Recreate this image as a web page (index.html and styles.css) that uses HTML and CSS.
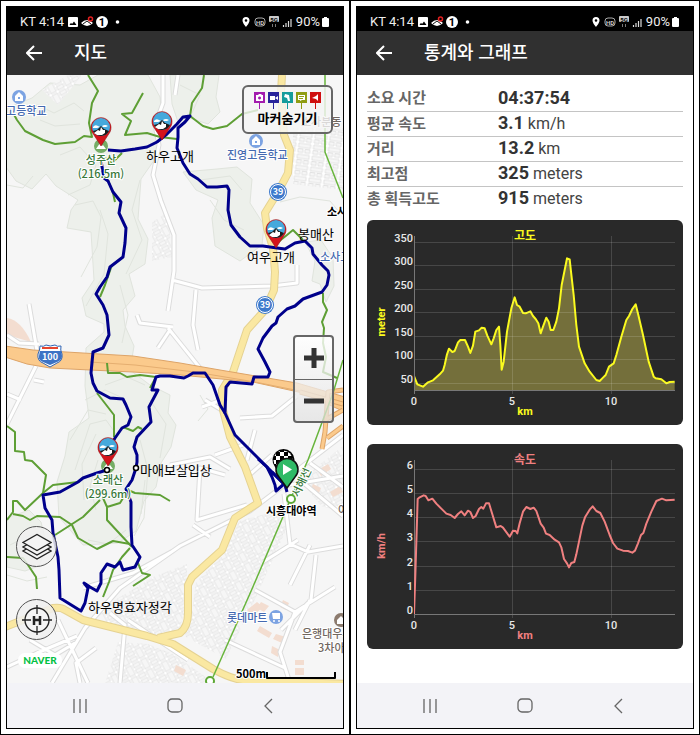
FILE: index.html
```html
<!DOCTYPE html>
<html lang="ko">

<head>
    <meta charset="UTF-8">
    <meta name="viewport" content="width=device-width, initial-scale=1.0">
    <title>지도 / 통계와 그래프</title>
    <link rel="stylesheet" href="styles.css">
</head>

<body>

    <main class="screens">
        <section class="frame">
            <div class="phone">
                <div class="status-bar">
                    <span>KT 4:14</span>
                    <svg class="status-left" viewBox="0 0 52 14">
                        <g id="status-left">
                            <path fill="#fff" fill-rule="evenodd" d="M1 2h8q1 0 1 1v8q0 1-1 1H1q-1 0-1-1V3q0-1 1-1zM1.500 10h7L6 6.500 4 9 3 7.800z" />
                            <path fill="#fff" d="M13 8q6-6 12 0-6 6-12 0z" />
                            <path fill="none" stroke="#111" d="M15 9l4-3 4 3" />
                            <circle cx="22.500" cy="4" r="2" fill="none" stroke="#e32020" stroke-width="1.500" />
                            <circle cx="34" cy="7" r="6" fill="#fff" />
                            <text class="badge-number" x="34" y="11">1</text>
                            <circle cx="49.500" cy="7" r="1.800" fill="#fff" />
                        </g>
                    </svg>
                    <svg class="status-right" viewBox="0 0 50 14">
                        <g id="status-right">
                            <path fill="#fff" fill-rule="evenodd" d="M4 2a3.500 3.500 0 0 1 3.500 3.500C7.500 8 4 12 4 12S.5 8 .5 5.500A3.500 3.500 0 0 1 4 2zm0 2.200a1.300 1.300 0 1 0 0 2.600 1.300 1.300 0 0 0 0-2.600z" />
                            <rect x="13" y="3" width="10" height="8" rx="3" fill="none" stroke="#aaa" />
                            <text class="tiny" x="18" y="9.500">HD</text>
                            <rect x="27" y="1" width="10" height="6" rx="1" fill="#ccc" />
                            <text class="tiny dark" x="32" y="6.500">5G</text>
                            <path stroke="#777" d="M30.500 9v3M33.500 9v3" />
                            <path stroke="#ddd" stroke-width="1.200" d="M41.500 12v-2M44 12V8M46.500 12V6M49 12V4" />
                        </g>
                    </svg>
                    <span>90%</span>
                    <svg class="battery" viewBox="0 0 8 12"><path id="battery" fill="#fff" d="M2 1h3v1h1q1 0 1 1v7q0 1-1 1H1q-1 0-1-1V3q0-1 1-1h1z" /></svg>
                </div>
                <header class="title-bar">
                    <button class="back-btn" aria-label="뒤로">
                        <svg viewBox="0 0 16 16"><path id="arrow" d="M16 8H1M8 1L1 8l7 7" /></svg>
                    </button>
                    <h1>지도</h1>
                </header>

                <div class="map">
                    <svg class="map-canvas" viewBox="7 75 336 608">
                        <defs>
                            <pattern id="blocks" width="17" height="12" patternUnits="userSpaceOnUse" patternTransform="rotate(-28)">
                                <rect width="17" height="12" fill="#fff" />
                                <path class="block" d="M1 1h6v10H1zM9 1h7v4H9zM9 7h7v4H9z" />
                            </pattern>
                            <pattern id="blocks-right" width="15" height="11" patternUnits="userSpaceOnUse" patternTransform="rotate(8)">
                                <rect width="15" height="11" fill="#fff" />
                                <path class="block" d="M1 1h12v4H1zM1 6.500h5v3.500H1zM8 6.500h5v3.500H8z" />
                            </pattern>
                            <pattern id="checks" width="8" height="8" patternUnits="userSpaceOnUse">
                                <rect width="8" height="8" fill="#fff" />
                                <path d="M0 0h4v4H0zM4 4h4v4H4z" />
                            </pattern>
                            <path id="streets" d="M29 304l8 47M36 366l-29 58M34 380l10 2M7 394l14 6M7 335l12 8 20 1M163 75v28l-8 22 4 20-6 30 8 26 13 34v36l-6 40M168 328l32 40M178 75l-3 20M172 280l30 8 70-2 25-3V265M196 290l-3 35 5 25M137 315l3 8 33 4M170 330l-12 18M205 400l20 12M202 407l25-9M215 455l28-10M170 465l40-8 20 12M240 418l32-2 25-20M255 430l-8 30M272 455l-25 22M225 475l-25-7-3 52 50-15M193 525l17 12M7 667l30-14 40-17M52 683l33-55 35-40 60-42 70-35 33-25 60-10M83 588l50-15 40-22M120 683l5-58-15-12M128 620l60 40M284 494l6 50 18 8 35-6M298 540l-35 22M310 545l-20 40M316 555l-5 45-30 30M255 590l40 22 40-25M295 612l-15 40 10 31M225 640l60 28M310 600l-15 30M300 480l43 36M310 463l33 24M343 435l-52 40M30 640l25 15 20-12M58 620l30 63M80 683l-4-20 20-15" />
                            <path id="main-yellow" d="M282 75l-1 18 3 42 6 15-2 23-10 19-13 21 2 15 6 20 2 24-1 18-9 20-18 20-14 42-11 18 1 20 7 27 15 30 13 36-23 15-13 32-30 27-4 8v28q0 14-8 20l-22 5" />
                            <path id="south-yellow" d="M0 629L53 608q8-1 12 2l18 10 64 16 26 8 40 25q18 10 30 11l107 4" />
                            <path id="orange-ramps" d="M343 390l-15 2-3 40-3 17M327 438l16-12M325 420l18-10M300 392l43 12" />
                            <g id="peak">
                                <path d="M0 19L-9 5A10 10 0 1 1 9 5z" fill="#d4141c" stroke="#961016" stroke-width=".6" />
                                <circle r="9" fill="#45a9dc" />
                                <path d="M-8 0q2-3 5-1l2 1-3 1h-4zM1-1q3-2 6 0l-2 1H2z" fill="#fff" />
                                <path d="M-8 4l4-1 4-4 3 3 5 2a9 9 0 0 1-16 0z" fill="#1b1b1b" />
                                <path d="M-7 6l4-3 2 1 1-4 2 3 2 0 0 3-3 2h-5z" fill="#fff" />
                            </g>
                            <g id="summit">
                                <circle r="7" fill="#75ad65" />
                                <path d="M-5 3l4-6 2 3 1-1 3 4z" fill="#fff" />
                            </g>
                            <g id="route-39">
                                <circle r="9" fill="#3d79cc" />
                                <circle r="7.500" fill="#3d79cc" stroke="#fff" />
                                <text class="road-number" y="3">39</text>
                            </g>
                        </defs>

                        <rect class="land" x="7" y="75" width="336" height="608" />

                        <g class="forest">
                            <path d="M7 108l25-10 18-15 30 2 18-10h50l12 22 3 30-8 32-14 20-3 40 10 20-3 25-16 10 6 22-12 14 2 16 9 20-4 24 20 15 20 10-2 18 8 12-5 22-10 16-5 24-12 14-8 30-18 12-35 2-24-28-2-35 8-26 4-24 20-14-4-32 1-38 18-16v-8l-18-8-4-18 12-18-3-48-24-4 4-18 7-10-22-14-10-12-14 15-16-8-10-14z" />
                            <path d="M170 75h49l-3 22 4 15-12 12-18-6-12 4-6-18z" />
                            <path d="M183 172l34-3 20-2 15 12-2 24 14 22-2 20-22 16-25-15-3-28 6-18-22-10z" />
                            <path d="M305 242l16-2 12 18 1 28-8 16-6-18-8-3 3-20z" />
                            <path d="M7 518l22-8 12 12 6 24-8 20-14 5-18-4z" />
                        </g>
                        <g class="contour">
                            <path d="M20 110l18-5 16 8 20-10 10 8M40 120l15 6 25-2M60 155l20-8 16 18-6 20-22 10M75 205l18-4 8 16-4 30-16 30M100 210l8 24-4 40-18 32M140 180l-8 30 10 30-16 34M120 285l8 30-6 28M85 400l20-10 18 8M70 440l18-30 18 4M75 470l15-46 16-4 10 14M84 500l-2-36 14-30M96 510l-6-24 8-26M150 400l16 24-6 34M140 440l8 30-4 48-10 18M145 480l-4 34M88 540l20 4 18-14M105 385l22-8 18 8" />
                            <path d="M180 85l20 10-8 18M200 180l30-4 12 14M210 200l14 20 20 10M10 545l20-10 8 8M7 575l20 6 20-4M7 185l16 3 10-12M280 202l20-5 30 4 10 12M200 395l8 14-10 12" />
                        </g>

                        <path fill="url(#blocks)" d="M95 612l60-36 32-12v40l-8 27-24 6-45-12z" />
                        <path fill="url(#blocks)" d="M196 582l28-28 15-33 45-12 6 12-32 72-32 66-40-22-4-10 10-16z" />
                        <path fill="url(#blocks)" d="M118 642l30 2 25 10 37 26 2 3H105z" />
                        <path fill="url(#blocks-right)" d="M293 128h50v62l-50-6z" />
                        <path fill="url(#blocks)" d="M300 480l43-34v66l-22-6z" />
                        <path fill="url(#blocks)" d="M42 90l26-15h14l-24 30zM152 222l16-10 4 45-20 4z" />
                        <g class="buildings">
                            <path d="M7 318q14 2 24 24l-24-7z" />
                            <path d="M247 610l10-8 6 5-10 9zM261 602l8 4-5 6-7-4zM260 626l12 7-3 5-12-7zM276 634l10 3-4 6-9-4zM283 600l6 3-3 7-6-3zM272 646l8 4-2 7-7-4zM295 660h9v5h-9zM295 668h9v7h-9zM176 665l10 5-3 6-9-5zM313 484l8 4-3 7-8-4zM318 470l10-6 3 5-10 7zM330 492l10-6 3 6-10 5z" />
                        </g>

                        <use href="#streets" class="street-case" />
                        <use href="#streets" class="street" />
                        <use href="#main-yellow" class="yellow-case" />
                        <use href="#south-yellow" class="yellow-case" />
                        <use href="#main-yellow" class="yellow" />
                        <use href="#south-yellow" class="yellow" />
                        <path class="highway" d="M5 346l28 4 100 6 47 7 40 7 77 13 48 14v15l-42-19-50-11-73-7-47-3-43-2-40-2-23-4-22-7z" />
                        <path class="highway-line" d="M90 362l45 3 60 7 60 10 50 10 38 13" />
                        <use href="#orange-ramps" class="ramp-case" />
                        <use href="#orange-ramps" class="ramp" />

                        <path class="rail" d="M343 360l-10 33-25 67-17 38-39 91-39 88M325 75v77l18 46" />
                        <g class="trail">
                            <path d="M88 75l10 16-6 12-3 20 3 14-8-1-9 6-20 2-12-4-18-9-8-11-4-7" />
                            <path d="M143 93l-11 20-10 1 9 7-6 14 22-2 13 4 17 2M204 75l-2 13-10 15-2 13 13 10 10 3 14-3 15-12 16-4" />
                            <path d="M104 157l8 6 10-10M108 180l5 13 2 9M112 265l-7 20-5 12M277 243l10-8 6-5 10 10M323 293v9l4 8-5 12 2 6-1 15 3 14-3 15 14 6" />
                            <path d="M107 363l1 10h12l7 4 13-2 16 2-6 11M97 393l17 22v22M123 427l10 4 5-4 4 2" />
                            <path d="M7 426l8 6v19l9 1 1 8 7 1 14 14-3 18-18 17-8-9h-4v11l-6 8M13 514l10 2 7 4 7-4 23 1 12 8 6 13 19 11 16-8 17 3" />
                            <path d="M43 493l10-8 25-3M100 500l-17 17-28 18M103 498l4 9v13l25 27M107 507l13-4 8-13 7 3 25 2 10 6M7 557l16 1 5 7 8 12 1 12" />
                            <path d="M130 548l-8 9-9 13-4 12-6 15M138 563l4 10 8 2-17 11" />
                        </g>

                        <use href="#summit" x="101" y="146" />
                        <use href="#summit" x="108" y="466" />

                        <g class="route">
                            <path d="M108 150l13 1 14-2 12-2 10-5 10-8 10-10 6-7 7-1-5 6-7 6v9l-1 11 6 15 7 11 8 5 9 8h10l10-1 2 4-1 20 3 15 9 12 10 9h13l14 2 8 1 10-6 10-2 7 7 1 6 9 11 6 6 1 4-2 10-5 7-19 7-8 7-8 3-9 8-2 6-4 3-9 12-5 11 7 13 5 10-2 5h-14l-2 7-22-2-4 5-1 26 10 22 25 25 12 12 13 13 2 7" />
                            <path d="M225 413l-5-8-7-20-8-12h-12l-5 3-4 2-14-2h-10l-4 1-4 13h6l-9 17 2 15-14 15-3 10 3 8v7l-1 6-4 12-6 9 5 13v25l1 18 8 12-5 10-12 3-3-8-5 5-8-3-6 9v10l-4 8-7-4-6-4 4 5-3 15-4 8-21-13-1-28-1-13-5-24-1-13-7-12-2-13 17-3 18-10 5-4 14-5 10-3" />
                            <path d="M111 445l4-7 7-10 6-3 3-8-5-12-3-6-13-1-13-7-4-8-2-10 2-21 10-4 6-13-2-20-4-10-7-11 4-7 7-10 3-10 13-10 2-14 1-15-7-15 2-11-8-10-5-11-4-3-4-23" />
                            <path d="M258 459l9 8 5 10 3 8 1 6 8-7-12-12" />
                        </g>
                        <circle class="stop" cx="107" cy="470" r="2.500" />
                        <circle class="stop" cx="136" cy="468" r="2.500" />

                        <path fill="#fff" stroke="#2f64b4" d="M40 346q4 1 6-1 4 2 9 0 2 2 6 1-1 4 1 8 1 7-5 9l-7 4-7-4q-6-2-5-9 2-4 2-8z" />
                        <path fill="#3c73c5" d="M40 351h21l1 5q0 4-5 6l-7 3-7-3q-5-2-4-6z" />
                        <path fill="#e6452e" d="M42 347h16v2H42z" />
                        <text class="road-number" x="50" y="360">100</text>
                        <use href="#route-39" x="278" y="192" />
                        <use href="#route-39" x="265" y="305" />

                        <g class="poi">
                            <circle cx="19" cy="97" r="7" />
                            <circle cx="256" cy="141" r="7" />
                            <circle cx="276" cy="617" r="7" />
                            <circle cx="341" cy="620" r="7" fill="#8c7b6e" />
                            <path fill="#fff" d="M15 96l4-4 4 4v5h-8zM252 140l4-4 4 4v5h-8zM272 613h8v6h-7zM337 620l4-4 4 4v4h-8z" />
                            <path fill="#7ca3e2" d="M18 97h2v2h-2zM255 141h2v2h-2z" />
                            <circle cx="274" cy="621" r="1" fill="#fff" />
                            <circle cx="279" cy="621" r="1" fill="#fff" />
                        </g>
                        <circle class="station" cx="291" cy="499" r="4" />
                        <circle class="station" cx="210" cy="681" r="4" />

                        <g class="text-blue">
                            <text x="-4" y="115">명고등학교</text>
                            <text x="227" y="159">진영고등학교</text>
                            <text x="320" y="261">소사고</text>
                            <text x="227" y="622">롯데마트</text>
                        </g>
                        <g class="text-gray">
                            <text x="301" y="126">소사분동</text>
                            <text x="338" y="514">어</text>
                            <text x="302" y="638">은행대우푸</text>
                            <text x="318" y="652">3차아</text>
                        </g>
                        <g class="text-green">
                            <text x="101" y="164">성주산</text>
                            <text x="101" y="178">(216.5m)</text>
                            <text x="108" y="484">소래산</text>
                            <text x="108" y="498">(299.6m)</text>
                            <text transform="translate(305 484) rotate(-65)">서해선</text>
                        </g>
                        <g class="text-black">
                            <text x="146" y="161">하우고개</text>
                            <text x="298" y="239">봉매산</text>
                            <text x="247" y="262">여우고개</text>
                            <text x="140" y="475">마애보살입상</text>
                            <text x="88" y="612">하우명효자정각</text>
                        </g>
                        <g class="text-bold">
                            <text x="327" y="216">소사</text>
                            <text x="266" y="515">시흥대야역</text>
                            <text x="236" y="678">500m</text>
                        </g>
                        <path class="scale" d="M267 672v6h68v-6" />

                        <use href="#peak" x="101" y="127" />
                        <use href="#peak" x="162" y="121" />
                        <use href="#peak" x="276" y="229" />
                        <use href="#peak" x="108" y="447" />
                        <path d="M284 482l-9-15a11 11 0 1 1 17 0z" />
                        <circle cx="283" cy="460" r="9.500" fill="url(#checks)" />
                        <path fill="#2fba66" stroke="#111" stroke-width="1.500" d="M287 488l-8-11a11 11 0 1 1 16 0z" />
                        <path fill="#fff" d="M283 464v11l9-5.500z" />
                    </svg>

                    <button class="marker-btn">
                        <svg viewBox="0 0 67 17">
                            <path fill="#a31cae" d="M0 0h11v11H6v6H5v-6H0z" />
                            <path fill="#29249b" d="M14 0h11v11h-5v6h-1v-6h-5z" />
                            <path fill="#159c9c" d="M28 0h11v11h-5v6h-1v-6h-5z" />
                            <path fill="#8f9d13" d="M42 0h11v11h-5v6h-1v-6h-5z" />
                            <path fill="#cf1010" d="M56 0h11v11h-5v6h-1v-6h-5z" />
                            <path fill="#fff" fill-rule="evenodd" d="M2 3h2l1-1h2l1 1h1v6H2zM5.500 4.500a1.500 1.500 0 1 0 .1 0zM16 4h5v4h-5zM21 6l3-2v4zM31 2l4 1 1 6-2 0-1-3-3-1zM44 3h7v5h-3l-2 1V8h-2zM64 2v7l-2-2-4-1 4-2z" />
                            <path stroke="#8f9d13" d="M45 4.500h5M45 6.500h4" />
                        </svg>
                        마커숨기기
                    </button>

                    <div class="zoom">
                        <button aria-label="확대"><svg viewBox="0 0 20 20"><path d="M10 0v20M0 10h20" /></svg></button>
                        <button aria-label="축소"><svg viewBox="0 0 20 20"><path d="M0 10h20" /></svg></button>
                    </div>

                    <div class="map-tools">
                        <button class="round-btn" aria-label="지도 레이어">
                            <svg viewBox="0 0 30 30">
                                <path d="M1 19l14 8 14-8-14-8z" />
                                <path d="M1 15l14 8 14-8-14-8z" />
                                <path d="M1 10.500l14 8 14-8-14-8z" />
                            </svg>
                        </button>
                        <button class="round-btn" aria-label="현재 위치">
                            <svg viewBox="0 0 30 30">
                                <circle cx="15" cy="15" r="12" />
                                <path d="M15 0v9M15 21v9M0 15h9M21 15h9" />
                                <path class="thick" d="M12 11v9M18 11v9M12 15h6" />
                            </svg>
                        </button>
                        <a class="naver" href="#">NAVER</a>
                    </div>
                </div>

                <nav class="nav-bar">
                    <button aria-label="최근 앱"><svg viewBox="0 0 16 16"><path id="nav-recent" d="M1 1v14M7 1v14M13 1v14" /></svg></button>
                    <button aria-label="홈"><svg viewBox="0 0 16 16"><rect id="nav-home" x="1" y="1" width="14" height="13" rx="4" /></svg></button>
                    <button aria-label="뒤로"><svg viewBox="0 0 16 16"><path id="nav-back" d="M11 1L4 8l7 7" /></svg></button>
                </nav>
            </div>
        </section>

        <section class="frame">
            <div class="phone">
                <div class="status-bar">
                    <span>KT 4:14</span>
                    <svg class="status-left" viewBox="0 0 52 14"><use href="#status-left" /></svg>
                    <svg class="status-right" viewBox="0 0 50 14"><use href="#status-right" /></svg>
                    <span>90%</span>
                    <svg class="battery" viewBox="0 0 8 12"><use href="#battery" /></svg>
                </div>
                <header class="title-bar">
                    <button class="back-btn" aria-label="뒤로">
                        <svg viewBox="0 0 16 16"><use href="#arrow" /></svg>
                    </button>
                    <h1>통계와 그래프</h1>
                </header>

                <div class="stats">
                    <table>
                        <tr>
                            <th scope="row">소요 시간</th>
                            <td><b>04:37:54</b></td>
                        </tr>
                        <tr>
                            <th scope="row">평균 속도</th>
                            <td><b>3.1</b> km/h</td>
                        </tr>
                        <tr>
                            <th scope="row">거리</th>
                            <td><b>13.2</b> km</td>
                        </tr>
                        <tr>
                            <th scope="row">최고점</th>
                            <td><b>325</b> meters</td>
                        </tr>
                        <tr>
                            <th scope="row">총 획득고도</th>
                            <td><b>915</b> meters</td>
                        </tr>
                    </table>

                    <svg class="chart altitude" viewBox="0 0 316 205">
                        <svg x="47" y="0" width="261" height="205" viewBox="193 15 783 615">
                            <path class="area" d="M193 483L203 508 220 515 235 502 250 496 270 478 280 467 285 450 292 418 298 401 308 411 315 408 325 382 332 375 346 375 355 395 362 414 370 392 377 350 388 346 396 338 405 340 413 362 425 388 432 370 440 345 448 335 452 390 456 464 462 440 472 350 485 280 495 247 502 270 510 275 520 294 528 295 542 289 550 303 558 312 566 325 573 355 580 335 590 308 597 320 603 345 611 345 620 320 628 280 636 210 645 165 652 130 660 133 664 170 672 240 680 330 688 395 705 445 720 470 740 495 750 498 760 488 768 480 778 455 792 445 800 420 815 365 830 315 838 303 848 282 858 268 866 300 880 360 897 440 912 485 918 490 935 493 950 505 960 501 975 500V525H193z" />
                            <path class="line" d="M193 483L203 508 220 515 235 502 250 496 270 478 280 467 285 450 292 418 298 401 308 411 315 408 325 382 332 375 346 375 355 395 362 414 370 392 377 350 388 346 396 338 405 340 413 362 425 388 432 370 440 345 448 335 452 390 456 464 462 440 472 350 485 280 495 247 502 270 510 275 520 294 528 295 542 289 550 303 558 312 566 325 573 355 580 335 590 308 597 320 603 345 611 345 620 320 628 280 636 210 645 165 652 130 660 133 664 170 672 240 680 330 688 395 705 445 720 470 740 495 750 498 760 488 768 480 778 455 792 445 800 420 815 365 830 315 838 303 848 282 858 268 866 300 880 360 897 440 912 485 918 490 935 493 950 505 960 501 975 500" />
                        </svg>
                        <path class="grid" d="M47 22.500h261M47 45.500h261M47 69.500h261M47 92.500h261M47 116.500h261M47 139.500h261M47 163.500h261M145.500 16v158M244.500 16v158" />
                        <path class="axis" d="M47.500 16v158M47 170.500h261" />
                        <g class="y-labels">
                            <text x="46" y="22">350</text>
                            <text x="46" y="45">300</text>
                            <text x="46" y="69">250</text>
                            <text x="46" y="92">200</text>
                            <text x="46" y="116">150</text>
                            <text x="46" y="139">100</text>
                            <text x="46" y="163">50</text>
                        </g>
                        <g class="x-labels">
                            <text x="47" y="185">0</text>
                            <text x="145" y="185">5</text>
                            <text x="244" y="185">10</text>
                        </g>
                        <text class="chart-title" x="158" y="20">고도</text>
                        <text class="unit" x="158" y="195">km</text>
                        <text class="unit" transform="translate(18 102) rotate(-90)">meter</text>
                    </svg>

                    <svg class="chart speed" viewBox="0 0 316 205">
                        <path class="grid" d="M47 25.500h261M47 49.500h261M47 73.500h261M47 97.500h261M47 122.500h261M47 146.500h261M145.500 16v158M244.500 16v158" />
                        <path class="axis" d="M47.500 16v158M47 170.500h261" />
                        <svg x="47" y="0" width="261" height="205" viewBox="193 27 783 615">
                            <path class="line" d="M193 537L197 420 204 192 210 187 222 181 228 183 236 196 248 191 260 206 278 224 290 236 303 240 315 249 325 237 335 229 345 241 355 227 362 231 370 249 378 243 388 222 395 216 401 221 409 205 418 205 428 238 440 277 453 273 460 278 480 305 490 287 498 288 503 295 510 265 520 230 530 216 542 222 552 218 560 228 573 266 582 278 589 296 600 300 615 314 628 322 635 337 643 372 652 385 658 397 665 384 674 381 680 358 688 320 698 272 706 247 720 224 729 214 740 228 752 234 765 260 780 300 790 324 803 341 820 347 835 348 848 353 856 347 865 325 874 300 881 294 890 266 905 230 920 198 937 191 950 196 975 194" />
                        </svg>
                        <g class="y-labels">
                            <text x="46" y="25">6</text>
                            <text x="46" y="49">5</text>
                            <text x="46" y="73">4</text>
                            <text x="46" y="97">3</text>
                            <text x="46" y="122">2</text>
                            <text x="46" y="146">1</text>
                            <text x="46" y="170">0</text>
                        </g>
                        <g class="x-labels">
                            <text x="47" y="185">0</text>
                            <text x="145" y="185">5</text>
                            <text x="244" y="185">10</text>
                        </g>
                        <text class="chart-title" x="158" y="20">속도</text>
                        <text class="unit" x="158" y="195">km</text>
                        <text class="unit" transform="translate(18 102) rotate(-90)">km/h</text>
                    </svg>
                </div>

                <nav class="nav-bar">
                    <button aria-label="최근 앱"><svg viewBox="0 0 16 16"><use href="#nav-recent" /></svg></button>
                    <button aria-label="홈"><svg viewBox="0 0 16 16"><use href="#nav-home" /></svg></button>
                    <button aria-label="뒤로"><svg viewBox="0 0 16 16"><use href="#nav-back" /></svg></button>
                </nav>
            </div>
        </section>
    </main>

</body>

</html>
```
FILE: styles.css
```css
* {
    box-sizing: border-box;
}

body {
    margin: 0;
    background-color: #fff;
    font-family: Roboto, "Noto Sans CJK KR", sans-serif;
}

button {
    margin: 0;
    padding: 0;
    border: none;
    background: none;
    font-family: inherit;
    cursor: pointer;
}

svg {
    display: block;
}

.screens {
    display: grid;
    grid-template-columns: 1fr 1fr;
    min-height: 100vh;
}

.frame {
    display: flex;
    padding: 5px;
    border: 1px solid #000;
}

.phone {
    display: flex;
    flex-direction: column;
    flex: 1;
    min-width: 0;
    border: 1px solid #000;
}

/* top bars */
.status-bar {
    display: flex;
    align-items: center;
    height: 24px;
    padding: 6px 13px 0 13px;
    background-color: #000;
    color: #eee;
    font-size: 13px;
    line-height: 16px;
}

.status-left {
    width: 52px;
    height: 14px;
    margin-left: 4px;
}

.status-right {
    width: 50px;
    height: 14px;
    margin-left: auto;
    margin-right: 4px;
}

.battery {
    width: 8px;
    height: 12px;
    margin-left: 2px;
}

.badge-number {
    font-size: 11px;
    font-weight: bold;
    text-anchor: middle;
}

.tiny {
    fill: #ccc;
    font-size: 6px;
    font-weight: bold;
    text-anchor: middle;
}

.tiny.dark {
    fill: #000;
}

.title-bar {
    display: flex;
    align-items: center;
    gap: 32px;
    height: 44px;
    padding-left: 19px;
    background-color: #303030;
    color: #fff;
}

.title-bar h1 {
    margin: 0;
    font-size: 18px;
    font-weight: 500;
    line-height: 24px;
}

.back-btn svg {
    width: 16px;
    height: 16px;
    fill: none;
    stroke: #fff;
    stroke-width: 2;
}

/* map */
.map {
    position: relative;
    flex: 1;
    overflow: hidden;
}

.map-canvas {
    width: 100%;
    font-family: "Noto Sans CJK KR", sans-serif;
}

.land {
    fill: #f6f6f6;
}

.forest {
    fill: #edf0eb;
    stroke: #e0e4dd;
}

.contour {
    fill: none;
    stroke: #e0e4dd;
}

.block {
    fill: #f6f6f6;
    stroke: #dcdcdc;
    stroke-width: 0.8;
}

.buildings {
    fill: #f3ddd0;
}

.street-case,
.street,
.yellow-case,
.yellow,
.ramp-case,
.ramp,
.highway-line,
.rail,
.trail,
.route,
.scale {
    fill: none;
    stroke-linejoin: round;
}

.street-case {
    stroke: #dcdcdc;
    stroke-width: 5;
}

.street {
    stroke: #fff;
    stroke-width: 3;
}

.yellow-case {
    stroke: #e5d292;
    stroke-width: 8;
}

.yellow {
    stroke: #fae8a2;
    stroke-width: 6;
}

.highway {
    fill: #fbca8c;
    stroke: #dda468;
}

.highway-line {
    stroke: #e5ae70;
}

.ramp-case {
    stroke: #dda468;
    stroke-width: 5;
}

.ramp {
    stroke: #fbca8c;
    stroke-width: 3;
}

.rail {
    stroke: #68b53c;
    stroke-width: 1.5;
}

.trail {
    stroke: #5e9f35;
    stroke-width: 2;
}

.route {
    stroke: #00008b;
    stroke-width: 3;
}

.stop {
    fill: #fff;
    stroke: #000;
    stroke-width: 1.5;
}

.station {
    fill: #fff;
    stroke: #5da836;
    stroke-width: 2;
}

.poi {
    fill: #7ca3e2;
}

.road-number {
    fill: #fff;
    font-size: 9px;
    font-weight: bold;
    text-anchor: middle;
}

.text-blue,
.text-gray,
.text-green,
.text-bold {
    font-size: 11px;
    font-weight: 500;
    paint-order: stroke;
    stroke: #fff;
    stroke-width: 2px;
}

.text-blue {
    fill: #4469b0;
}

.text-gray {
    fill: #71675f;
}

.text-green {
    fill: #37783a;
    text-anchor: middle;
}

.text-bold {
    font-weight: bold;
}

.text-black {
    font-size: 13px;
}

.scale {
    stroke: #000;
    stroke-width: 2;
}

/* controls over the map */
.marker-btn {
    position: absolute;
    top: 10px;
    right: 10px;
    display: flex;
    flex-direction: column;
    align-items: center;
    gap: 2px;
    width: 91px;
    padding: 5px 0;
    border: 2px solid #666;
    border-radius: 6px;
    background-color: rgba(245, 245, 245, 0.8);
    color: #000;
    font-size: 13px;
    font-weight: bold;
    line-height: 16px;
}

.marker-btn svg {
    width: 67px;
    height: 17px;
}

.zoom {
    position: absolute;
    right: 9px;
    bottom: 260px;
    display: flex;
    flex-direction: column;
    width: 41px;
    border: 2px solid #666;
    border-radius: 4px;
    background: linear-gradient(rgba(255, 255, 255, 0.8), rgba(225, 225, 225, 0.7));
}

.zoom button {
    display: grid;
    place-items: center;
    height: 42px;
}

.zoom button + button {
    border-top: 1px solid #666;
}

.zoom svg {
    width: 20px;
    height: 20px;
    stroke: #333;
    stroke-width: 5;
}

.map-tools {
    position: absolute;
    left: 9px;
    bottom: 15px;
    display: flex;
    flex-direction: column;
}

.round-btn {
    display: grid;
    place-items: center;
    width: 41px;
    height: 41px;
    margin-bottom: 32px;
    border: 1px solid #555;
    border-radius: 50%;
    background-color: rgba(240, 240, 240, 0.85);
}

.round-btn + .round-btn {
    margin-bottom: 13px;
}

.round-btn svg {
    width: 30px;
    height: 30px;
    fill: #f4f4f4;
    stroke: #222;
    stroke-width: 1.3;
}

.round-btn .thick {
    stroke-width: 2.5;
}

.naver {
    width: 44px;
    margin-left: 2px;
    border-radius: 7px;
    background-color: #fff;
    color: #03c143;
    font-family: Lato, sans-serif;
    font-size: 10px;
    font-weight: 900;
    line-height: 15px;
    text-align: center;
    text-decoration: none;
}

/* statistics */
.stats {
    flex: 1;
    padding: 11px 10px 0;
}

table {
    width: 100%;
    margin-bottom: 9px;
    border-collapse: collapse;
}

tr + tr {
    border-top: 1px solid #c4c4c4;
}

th,
td {
    height: 25px;
    padding: 0;
    line-height: 20px;
    text-align: left;
}

th {
    width: 131px;
    color: #666;
    font-size: 15px;
    font-weight: bold;
}

td {
    color: #444;
    font-size: 16px;
}

td b {
    color: #333;
    font-size: 18px;
}

.chart {
    width: 100%;
    margin-bottom: 19px;
    border-radius: 6px;
    background-color: #292929;
}

.altitude {
    --accent: #fafa1e;
}

.speed {
    --accent: #f08080;
}

.area {
    fill: #f9eb5b;
    opacity: 0.36;
}

.line {
    fill: none;
    stroke: var(--accent);
    stroke-width: 6;
    stroke-linejoin: round;
}

.grid {
    stroke: rgba(255, 255, 255, 0.14);
}

.axis {
    stroke: #777;
}

.y-labels,
.x-labels {
    fill: #e8e8e8;
    font-size: 11px;
    font-weight: 500;
}

.y-labels {
    text-anchor: end;
}

.x-labels {
    text-anchor: middle;
}

.chart-title,
.unit {
    fill: var(--accent);
    font-weight: bold;
    text-anchor: middle;
}

.chart-title {
    font-size: 12px;
}

.unit {
    font-size: 11px;
}

/* android buttons */
.nav-bar {
    display: flex;
    justify-content: center;
    height: 45px;
    background-color: #f3f3f7;
}

.nav-bar button {
    display: grid;
    place-items: center;
    width: 94px;
}

.nav-bar svg {
    width: 16px;
    height: 16px;
    fill: none;
    stroke: #666;
    stroke-width: 1.3;
}
```
